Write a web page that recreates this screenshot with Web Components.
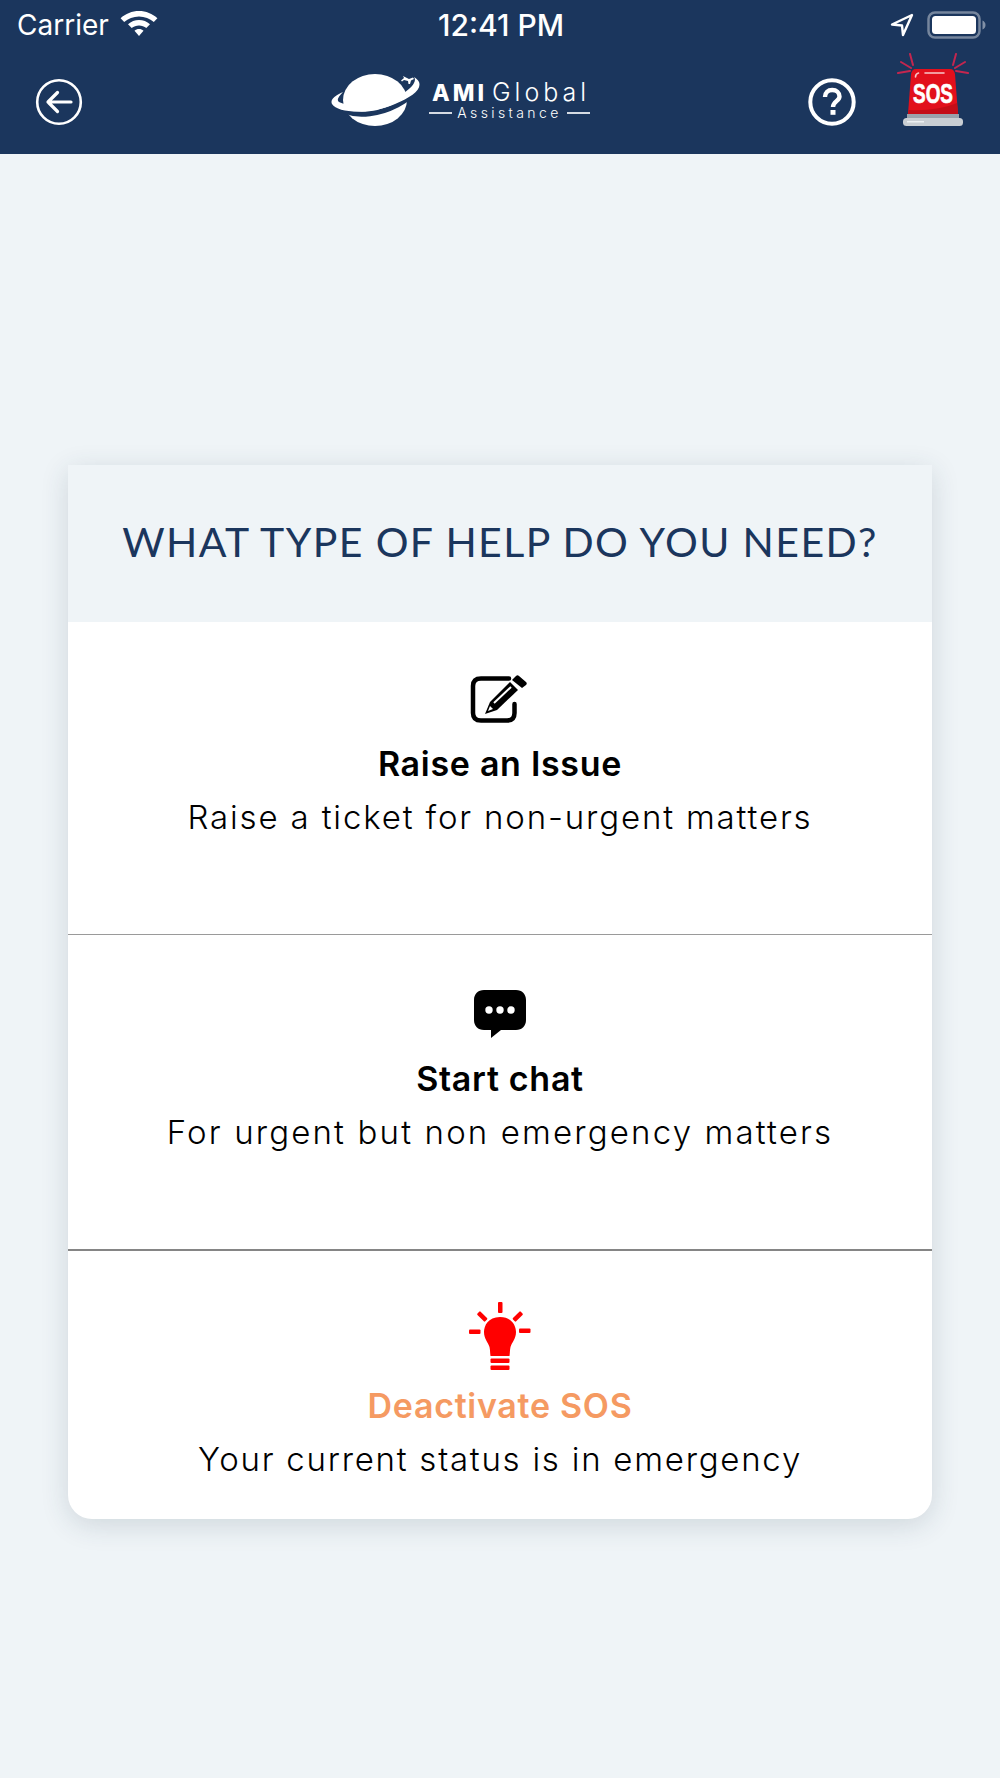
<!DOCTYPE html>
<html>
<head>
<meta charset="utf-8">
<title>AMI Global Assistance</title>
<style>
  html, body { margin: 0; padding: 0; }
  body { background: #eff4f7; width: 1000px; height: 1778px; overflow: hidden; }
</style>
</head>
<body>
<app-screen>
  <help-card heading="WHAT TYPE OF HELP DO YOU NEED?">
    <help-option title="Raise an Issue" text="Raise a ticket for non-urgent matters" icon="edit" style="height:313px;--pad:53px;--rule:1px solid #9a9a9a;--track:1.84px"></help-option>
    <help-option title="Start chat" text="For urgent but non emergency matters" icon="chat" style="height:316px;--pad:55px;--rule:2px solid #858585;--track:2.15px"></help-option>
    <help-option title="Deactivate SOS" text="Your current status is in emergency" icon="bulb" tone="sos" style="height:268px;--pad:51px;--rule:0;--track:1.75px"></help-option>
  </help-card>
</app-screen>

<script>
class StatusBar extends HTMLElement {
  constructor() {
    super();
    this.attachShadow({ mode: 'open' }).innerHTML = `
      <style>
        :host { display: flex; align-items: center; height: 50px; padding: 0 13px 0 17px; color: #fff; font: 400 28px Inter, "Liberation Sans", sans-serif; box-sizing: border-box; }
        .left, .right { flex: 1; display: flex; align-items: center; }
        .left { gap: 11px; }
        .right { justify-content: flex-end; gap: 13px; }
        .time { font-weight: 500; font-size: 30px; margin-right: 2px; }
        svg { display: block; }
      </style>
      <div class="left">
        <span>Carrier</span>
        <svg width="38" height="28" viewBox="0 0 38 28" fill="#fff"><path d="M19 0C12 0 5.600 2.700 0.600 7.200L4.200 11C8.200 7.500 13.300 5.400 19 5.400S29.800 7.500 33.800 11L37.400 7.200C32.400 2.700 26 0 19 0Z"/><path d="M19 9C15 9 11 10.500 8 13.200L11.700 17C13.700 15.400 16.200 14.400 19 14.400S24.300 15.400 26.300 17L30 13.200C27 10.500 23 9 19 9Z"/><path d="M19 18C17.300 18 15.700 18.600 14.500 19.700L19 25L23.500 19.700C22.300 18.600 20.700 18 19 18Z"/></svg>
      </div>
      <span class="time">12:41 PM</span>
      <div class="right">
        <svg width="24" height="24" viewBox="0 0 24 24" fill="none" stroke="#fff" stroke-width="2.400" stroke-linejoin="round"><path d="M22 2L2 11.500L12 12.500L13 22Z"/></svg>
        <svg width="60" height="28" viewBox="0 0 60 28"><rect x="1.500" y="1.500" width="51" height="25" rx="6.500" fill="none" stroke="#fff" stroke-opacity=".4" stroke-width="2.500"/><rect x="5" y="5" width="44" height="18" rx="3.500" fill="#fff"/><path d="M55.500 9.500C57.500 10.500 58.500 12 58.500 14S57.500 17.500 55.500 18.500Z" fill="#fff" fill-opacity=".45"/></svg>
      </div>`;
  }
}

class BrandLogo extends HTMLElement {
  constructor() {
    super();
    this.attachShadow({ mode: 'open' }).innerHTML = `
      <style>
        :host { display: flex; width: 260px; height: 62px; color: #fff; font-family: Inter, "Liberation Sans", sans-serif; }
        svg { display: block; flex: none; }
        .words { margin: 10px 0 0 8px; width: 161px; }
        .name { display: flex; align-items: baseline; height: 22px; line-height: 22px; margin-left: 3px; white-space: nowrap; }
        .ami { font-size: 23px; font-weight: 800; letter-spacing: 3px; }
        .global { font-size: 25px; font-weight: 300; letter-spacing: 4px; margin-left: 5px; }
        .sub { display: flex; align-items: center; justify-content: space-between; height: 14px; line-height: 14px; margin-top: 3px; font-size: 14px; font-weight: 300; letter-spacing: 3.400px; }
        .sub i { display: block; width: 23px; height: 1.500px; background: #d5dbe3; }
      </style>
      <svg width="90" height="62" viewBox="0 0 90 62">
        <ellipse cx="44" cy="29" rx="32" ry="26" fill="#fff"/>
        <path d="M2 28C10 52 62 48 92 14" fill="none" stroke="#1b365d" stroke-width="5"/>
        <path d="M12 21C3 25-1 29 1 33C7 43 42 43 64 33C80 26 91 19 88 11C87 9 85 7 83 6C86 10 82 17 68 25C50 35 20 37 8 31C5 29 8 25 12 21Z" fill="#fff"/>
        <path d="M72 5L78 8L82 6.500L83 8L80 9.500L79 13L77.500 13L77 10L73 9L71 10.500L70 9.500L73 7Z" fill="#fff"/>
      </svg>
      <div class="words">
        <div class="name"><span class="ami">AMI</span><span class="global">Global</span></div>
        <div class="sub"><i></i><span>Assistance</span><i></i></div>
      </div>`;
  }
}

class SosBeacon extends HTMLElement {
  constructor() {
    super();
    this.attachShadow({ mode: 'open' }).innerHTML = `
      <style>
        :host { display: block; width: 74px; height: 74px; }
        svg { display: block; }
        text { fill: #fff; stroke: #fff; stroke-width: .7px; font: 700 28px "Liberation Sans Narrow", "Liberation Sans", sans-serif; }
      </style>
      <svg width="74" height="74" viewBox="0 0 74 74">
        <g stroke="#c4264f" stroke-width="2" stroke-linecap="round" fill="none">
          <path d="M13 1L16 12M4 9L14 15M1 20L13 18"/>
          <path d="M59 1L56 12M68 9L58 15M71 20L59 18"/>
        </g>
        <path d="M19 16H53C56 16 57.500 18 58 21L61 61H11L14 21C14.500 18 16 16 19 16Z" fill="#e2101c"/>
        <path d="M12 57C30 58 48 55 60 50L61 61H11Z" fill="#c40d17"/>
        <path d="M18.500 24C18.500 21.500 19.500 20.500 21.500 20M28 20H47" stroke="#f7c7c9" stroke-width="1.600" stroke-linecap="round" fill="none"/>
        <text x="36" y="50" text-anchor="middle" textLength="40" lengthAdjust="spacingAndGlyphs">SOS</text>
        <rect x="10" y="61" width="52" height="4" fill="#9aa2ab"/>
        <rect x="6" y="65" width="60" height="8" rx="3.500" fill="#c9ced3"/>
        <rect x="10" y="68" width="17" height="1.500" fill="#eceff1"/>
      </svg>`;
  }
}

class AppHeader extends HTMLElement {
  constructor() {
    super();
    this.attachShadow({ mode: 'open' }).innerHTML = `
      <style>
        :host { display: flex; align-items: center; height: 104px; padding: 0 29px 0 35px; background: #1b365d; box-sizing: border-box; }
        svg { display: block; }
        brand-logo { margin-left: 248px; }
        .help { margin-left: auto; margin-right: 41px; }
        sos-beacon { margin-bottom: 24px; }
      </style>
      <svg width="48" height="48" viewBox="0 0 48 48" fill="none" stroke="#fff" stroke-linecap="round" stroke-linejoin="round"><circle cx="24" cy="24" r="21.800" stroke-width="2.600"/><path d="M36 24H13M22.500 14.500L13 24L22.500 33.500" stroke-width="3.200"/></svg>
      <brand-logo></brand-logo>
      <svg class="help" width="48" height="48" viewBox="0 0 48 48" fill="none" stroke="#fff"><circle cx="24" cy="24" r="21.700" stroke-width="4"/><path d="M17 19C17 14.500 20 12 24.200 12C28.500 12 31.500 14.800 31.500 18.500C31.500 23 25 23.500 25 29" stroke-width="4.400"/><rect x="22.500" y="32" width="5" height="4.800" fill="#fff" stroke="none"/></svg>
      <sos-beacon></sos-beacon>`;
  }
}

class AppScreen extends HTMLElement {
  constructor() {
    super();
    this.attachShadow({ mode: 'open' }).innerHTML = `
      <style>
        :host { display: block; height: 1778px; }
        .top { background: #1b365d; }
        main { padding: 311px 68px 0; }
      </style>
      <div class="top"><status-bar></status-bar><app-header></app-header></div>
      <main><slot></slot></main>`;
  }
}

class HelpCard extends HTMLElement {
  constructor() {
    super();
    this.attachShadow({ mode: 'open' }).innerHTML = `
      <style>
        :host { display: block; border-radius: 0 0 24px 24px; background: #fff; box-shadow: 0 6px 28px rgba(40, 60, 80, .16); }
        h1 { margin: 0; height: 157px; padding-bottom: 4px; box-sizing: border-box; display: flex; align-items: center; justify-content: center; background: #eff4f7; color: #1b365d; font: 400 41px Lato, "Open Sans", sans-serif; letter-spacing: 1.400px; }
      </style>
      <h1></h1>
      <slot></slot>`;
    this.shadowRoot.querySelector('h1').textContent = this.getAttribute('heading');
  }
}

const ICONS = {
  edit: `<svg width="60" height="50" viewBox="0 0 60 50"><path d="M39 3.500H11C5.500 3.500 3 6 3 11V38C3 43 5.500 45.500 11 45.500H37C42 45.500 44.500 43 44.500 38V29" fill="none" stroke="#000" stroke-width="4.500" stroke-linecap="round"/><path d="M20 27L15 39L27 35L48 15L40 7Z" fill="#000"/><path d="M42 5L46 1C47 0 48 0 49 1L56 7C57 8 57 9 56 10L52 13Z" fill="#000"/><path d="M24 28L41 12" stroke="#fff" stroke-width="2" fill="none"/><path d="M20 31L18 36L23 34Z" fill="#fff"/></svg>`,
  chat: `<svg width="52" height="50" viewBox="0 0 52 50"><path d="M10 0H42C48 0 52 4 52 10V30C52 36 48 40 42 40H27L17 48V40H10C4 40 0 36 0 30V10C0 4 4 0 10 0Z" fill="#000"/><circle cx="15" cy="20" r="3.700" fill="#fff"/><circle cx="26" cy="20" r="3.700" fill="#fff"/><circle cx="37" cy="20" r="3.700" fill="#fff"/></svg>`,
  bulb: `<svg width="62" height="68" viewBox="0 0 62 68" fill="#f00"><rect x="29" y="0" width="4.500" height="11" rx="1"/><rect x="11" y="9" width="4.500" height="11" rx="1" transform="rotate(-45 13.250 14.500)"/><rect x="46.500" y="9" width="4.500" height="11" rx="1" transform="rotate(45 48.750 14.500)"/><rect x="0" y="27.500" width="11.500" height="4.500" rx="1"/><rect x="50" y="26.500" width="11.500" height="4.500" rx="1"/><path d="M31 15C19 15 15 24 15 30C15 37 19 40 20.500 45C21.200 48 21 51 21.500 54H40.500C41 51 40.800 48 41.500 45C43 40 47 37 47 30C47 24 43 15 31 15Z"/><rect x="21.500" y="56.500" width="19" height="4.500" rx="1"/><rect x="21.500" y="63.500" width="19" height="4.500" rx="1"/></svg>`
};

class HelpOption extends HTMLElement {
  constructor() {
    super();
    this.attachShadow({ mode: 'open' }).innerHTML = `
      <style>
        :host { display: block; box-sizing: border-box; padding-top: var(--pad); text-align: center; border-bottom: var(--rule); font-family: Inter, "Open Sans", sans-serif; }
        .icon { display: flex; justify-content: center; height: 50px; }
        .icon svg { display: block; }
        h2 { margin: 15px 0 0; font-size: 34px; line-height: 48px; font-weight: 600; letter-spacing: .7px; color: #000; }
        p { margin: 5px 0 0; font-size: 33px; line-height: 48px; font-weight: 300; color: #000; letter-spacing: var(--track); white-space: nowrap; }
        :host([tone="sos"]) .icon { height: 68px; }
        :host([tone="sos"]) h2 { margin-top: 12px; color: #f59a62; }
      </style>
      <div class="icon"></div>
      <h2></h2>
      <p></p>`;
    const root = this.shadowRoot;
    root.querySelector('.icon').innerHTML = ICONS[this.getAttribute('icon')];
    root.querySelector('h2').textContent = this.getAttribute('title');
    root.querySelector('p').textContent = this.getAttribute('text');
  }
}

customElements.define('status-bar', StatusBar);
customElements.define('brand-logo', BrandLogo);
customElements.define('sos-beacon', SosBeacon);
customElements.define('app-header', AppHeader);
customElements.define('help-option', HelpOption);
customElements.define('help-card', HelpCard);
customElements.define('app-screen', AppScreen);
</script>
</body>
</html>
